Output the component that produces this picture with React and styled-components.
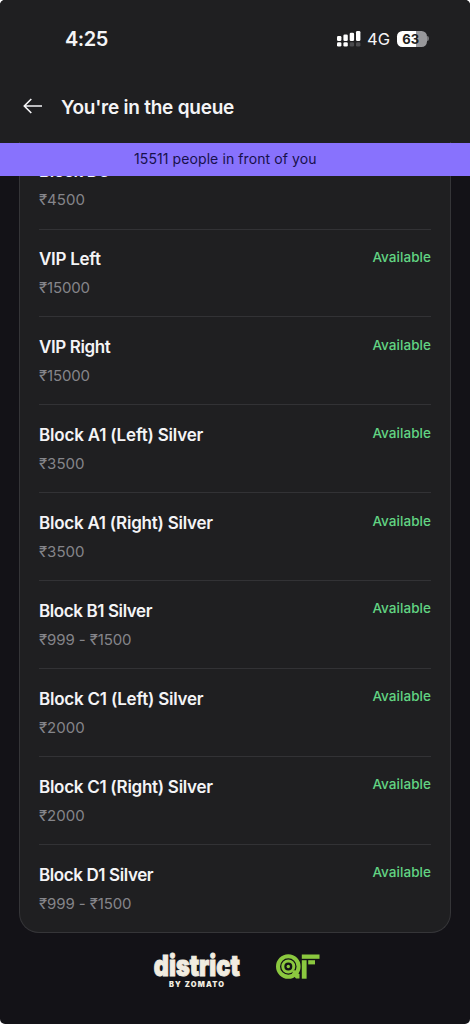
import React from 'react';
import styled, { createGlobalStyle } from 'styled-components';

const Global = createGlobalStyle`
  * { box-sizing: border-box; }
  body { margin: 0; background: #fff; }
`;
const Screen = styled.main`
  width: 470px; height: 1024px; overflow: hidden; border-radius: 5px;
  display: flex; flex-direction: column; background: #131217; color: #f4f4f6;
  font-family: Inter, "Noto Sans", sans-serif;
`;
const Header = styled.header`
  height: 143px; flex: none; background: #1f1f21; padding-top: 26px;
`;
const StatusBar = styled.div`
  height: 25px; display: flex; align-items: center; justify-content: space-between; padding: 0 41px 0 65px;
`;
const Fit = styled.span`
  white-space: pre; letter-spacing: ${p => p.$ls || 0}px;
`;
const Clock = styled(Fit)`font-size: 20px; font-weight: 600;`;
const Indicators = styled.div`display: flex; align-items: center;`;
const Network = styled(Fit)`font-size: 16.5px; font-weight: 400; margin: 0 7px 0 6px;`;
const Battery = styled.div`
  width: 29.5px; height: 16px; border-radius: 5.5px; display: flex; align-items: center; justify-content: center;
  background: linear-gradient(90deg, #fff 62%, #98989b 62%); color: #1f1f21;
  font-size: 13px; font-weight: 700; padding-right: 2px;
`;
const Tip = styled.i`width: 2px; height: 5px; border-radius: 0 2px 2px 0; background: #747477; margin-left: 0.5px;`;
const TitleBar = styled.div`
  display: flex; align-items: center; height: 30px; margin-top: 42px; padding-left: 23px;
  svg { margin: -4px 18px 0 0; }
`;
const Title = styled(Fit)`font-size: 19px; font-weight: 600; line-height: 30px;`;
const Banner = styled.div`
  height: 33px; flex: none; background: #8872fd; color: #17104b; position: relative; z-index: 1;
  font-size: 14px; line-height: 32px; padding-left: 134px;
`;
const Viewport = styled.div`flex: none; height: 757px; padding: 0 19px;`;
const Card = styled.section`
  margin-top: -34.4px; height: 791.4px; padding: 0 19px; background: #1f1f21;
  border: 1px solid #353538; border-top: 0; border-radius: 0 0 20px 20px;
`;
const Row = styled.div`
  height: 87.93px; padding-top: 17.6px; display: flex; justify-content: space-between; align-items: flex-start;
  border-bottom: 1px solid ${p => (p.$last ? 'transparent' : '#323235')};
`;
const Name = styled(Fit)`display: block; font-size: 17px; font-weight: 600; line-height: 24px;`;
const Price = styled(Fit)`display: block; font-size: 15px; line-height: 20px; margin-top: 7px; color: #85858a;`;
const Status = styled(Fit)`font-size: 13.5px; font-weight: 500; line-height: 20px; margin-top: -0.4px; color: #62d483;`;
const Footer = styled.footer`display: flex; padding: 18px 0 0 153px; gap: 34px;`;

const rows = [
  ['Block D6', '₹4500', -0.35, 0],
  ['VIP Left', '₹15000', -0.28, -0.15],
  ['VIP Right', '₹15000', -0.38, -0.15],
  ['Block A1 (Left) Silver', '₹3500', -0.19, 0],
  ['Block A1 (Right) Silver', '₹3500', -0.24, 0],
  ['Block B1 Silver', '₹999 - ₹1500', -0.4, -0.1],
  ['Block C1 (Left) Silver', '₹2000', -0.22, 0],
  ['Block C1 (Right) Silver', '₹2000', -0.28, 0],
  ['Block D1 Silver', '₹999 - ₹1500', -0.4, -0.1],
];

const Signal = () => (
  <svg width="24" height="18" viewBox="0 0 24 18" fill="#fff">
    <rect x="0" y="6" width="4.4" height="5" rx="1.3" />
    <rect x="6.4" y="4.5" width="4.4" height="6.5" rx="1.3" />
    <rect x="12.7" y="2.7" width="4.4" height="8.3" rx="1.3" />
    <rect x="19" y="1" width="4.4" height="10" rx="1.3" />
    <rect x="0" y="12.2" width="4.4" height="4.3" rx="1.3" />
    <rect x="6.4" y="12.2" width="4.4" height="4.3" rx="1.3" />
    <rect x="12.7" y="12.2" width="4.4" height="4.3" rx="1.3" fill="#4b4b4e" />
    <rect x="19" y="12.2" width="4.4" height="4.3" rx="1.3" fill="#4b4b4e" />
  </svg>
);
const Back = () => (
  <svg width="20" height="16" viewBox="0 0 20 16" fill="none" stroke="#f4f4f6" strokeWidth="1.6">
    <path d="M19 8H1.5M8.3 1 1.3 8l7 7" />
  </svg>
);
const Wordmark = styled.svg`display: block; overflow: visible;`;
const District = () => (
  <Wordmark width="89" height="40" viewBox="0 0 89 40" fill="#f1ece0" fontFamily="Inter, sans-serif">
    <text x="0.8" y="24.6" fontSize="29" fontWeight="900" stroke="#f1ece0" strokeWidth="1" strokeLinejoin="miter" textLength="86" lengthAdjust="spacingAndGlyphs">district</text>
    <text x="16" y="36" fontSize="7.4" fontWeight="900" textLength="55">BY ZOMATO</text>
  </Wordmark>
);
const Queue = () => (
  <svg width="45" height="30" viewBox="0 0 45 30" fill="#8bc83f">
    <circle cx="12.3" cy="15.5" r="10.3" fill="none" stroke="#8bc83f" strokeWidth="4" />
    <circle cx="12.3" cy="15.5" r="5.5" fill="none" stroke="#8bc83f" strokeWidth="3" />
    <circle cx="12.3" cy="15.5" r="1.7" />
    <path d="m17 20 2-1 4.5 4.5V27.5h-3.5L16 23z" />
    <rect x="25.8" y="3.5" width="17.7" height="4.3" />
    <rect x="25.8" y="9.2" width="4.8" height="18.5" />
    <rect x="32.2" y="9.2" width="6.8" height="4.2" />
  </svg>
);

export default function App() {
  return (
    <Screen>
      <Global />
      <Header>
        <StatusBar>
          <Clock $ls={-0.5}>4:25</Clock>
          <Indicators><Signal /><Network>4G</Network><Battery>63</Battery><Tip /></Indicators>
        </StatusBar>
        <TitleBar><Back /><Title $ls={-0.24}>You're in the queue</Title></TitleBar>
      </Header>
      <Banner><Fit $ls={0.09}>15511 people in front of you</Fit></Banner>
      <Viewport>
        <Card>
          {rows.map(([name, price, nls, pls], i) => (
            <Row key={name} $last={i === rows.length - 1}>
              <div><Name $ls={nls}>{name}</Name><Price $ls={pls}>{price}</Price></div>
              <Status $ls={0.05}>Available</Status>
            </Row>
          ))}
        </Card>
      </Viewport>
      <Footer><District /><Queue /></Footer>
    </Screen>
  );
}
